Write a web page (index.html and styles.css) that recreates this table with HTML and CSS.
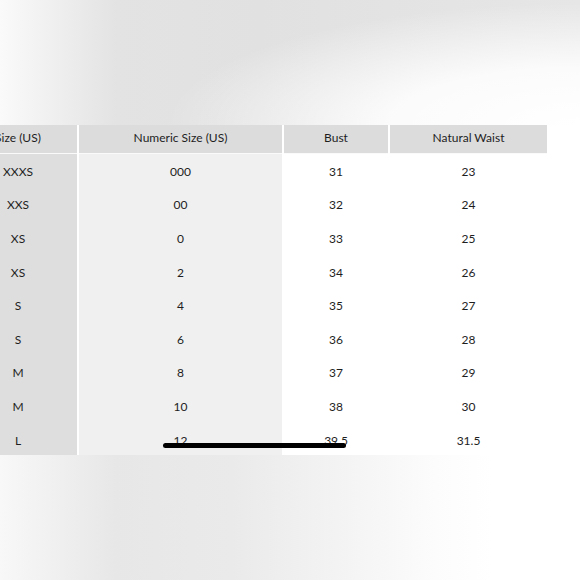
FILE: index.html
```html
<!DOCTYPE html>
<html>
<head>
<meta charset="utf-8">
<link rel="stylesheet" href="styles.css">
</head>
<body>
<div class="page">
  <div class="fade fade-top"></div>
  <div class="table-wrap">
    <table class="size-table">
      <colgroup>
        <col class="c1"><col class="c2"><col class="c3"><col class="c4">
      </colgroup>
      <thead>
        <tr><th>Size (US)</th><th>Numeric Size (US)</th><th>Bust</th><th>Natural Waist</th></tr>
      </thead>
      <tbody>
        <tr><td>XXXS</td><td>000</td><td>31</td><td>23</td></tr>
        <tr><td>XXS</td><td>00</td><td>32</td><td>24</td></tr>
        <tr><td>XS</td><td>0</td><td>33</td><td>25</td></tr>
        <tr><td>XS</td><td>2</td><td>34</td><td>26</td></tr>
        <tr><td>S</td><td>4</td><td>35</td><td>27</td></tr>
        <tr><td>S</td><td>6</td><td>36</td><td>28</td></tr>
        <tr><td>M</td><td>8</td><td>37</td><td>29</td></tr>
        <tr><td>M</td><td>10</td><td>38</td><td>30</td></tr>
        <tr><td>L</td><td>12</td><td>39.5</td><td>31.5</td></tr>
      </tbody>
    </table>
    <div class="scrollbar"></div>
  </div>
  <div class="fade fade-bottom"></div>
</div>
</body>
</html>
```
FILE: styles.css
```css
html, body {
  margin: 0;
  padding: 0;
  background: #fff;
}
body {
  font-family: Lato, "Noto Sans", sans-serif;
  color: #1e1e1e;
  width: 580px;
  height: 580px;
  overflow: hidden;
}
.page {
  display: flex;
  flex-direction: column;
  width: 580px;
  height: 580px;
}
.fade {
  flex: none;
}
.fade-top {
  height: 125px;
  background:
    radial-gradient(ellipse 95% 130% at 100% 100%, #ffffff 0%, rgba(255,255,255,0.85) 35%, rgba(255,255,255,0) 75%),
    linear-gradient(to right, #fafafa 0%, #e3e3e3 20%, #e1e1e1 45%, #e6e6e6 100%);
}
.fade-bottom {
  flex: 1;
  background: linear-gradient(to right, #f8f8f8 0%, #e7e7e7 20%, #eaeaea 40%, #f3f3f3 58%, #fcfcfc 75%, #ffffff 85%);
}
.table-wrap {
  position: relative;
  flex: none;
}
.size-table {
  table-layout: fixed;
  border-collapse: collapse;
  border-spacing: 0;
  width: 588px;
  margin-left: -41px;
  font-size: 12px;
}
.c1 { width: 119px; }
.c2 { width: 205px; }
.c3 { width: 106px; }
.c4 { width: 158px; }
.size-table th,
.size-table td {
  box-sizing: border-box;
}
.size-table th {
  height: 28px;
  padding: 0 0 2px;
  font-weight: 400;
  background: #dcdcdc;
  border-left: 2px solid #fff;
  border-bottom: 1px solid #fafafa;
  text-align: center;
  vertical-align: middle;
}
.size-table th:first-child { border-left: none; }
.size-table td {
  height: 33.6px;
  padding: 3px 0 0;
  text-align: center;
  vertical-align: middle;
  border-left: 2px solid #fff;
}
.size-table td:first-child {
  border-left: none;
  background: #dedede;
}
.size-table td:nth-child(2) {
  background: #f0f0f0;
}
.scrollbar {
  position: absolute;
  left: 163px;
  top: 318px;
  width: 183px;
  height: 5px;
  border-radius: 3px;
  background: #000;
}
```
